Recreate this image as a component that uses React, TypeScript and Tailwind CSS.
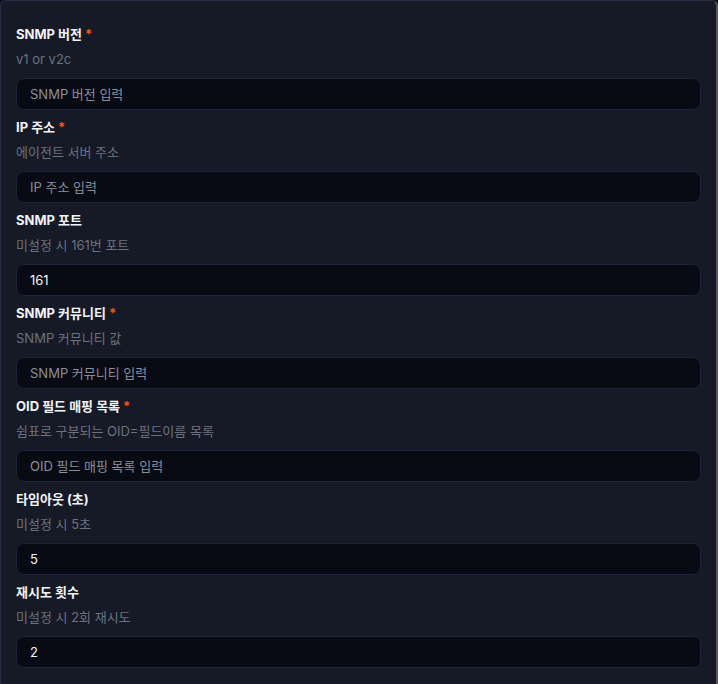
const fields = [
  { label: "SNMP 버전", required: true, hint: "v1 or v2c", placeholder: "SNMP 버전 입력", value: "" },
  { label: "IP 주소", required: true, hint: "에이전트 서버 주소", placeholder: "IP 주소 입력", value: "" },
  { label: "SNMP 포트", required: false, hint: "미설정 시 161번 포트", placeholder: "", value: "161" },
  { label: "SNMP 커뮤니티", required: true, hint: "SNMP 커뮤니티 값", placeholder: "SNMP 커뮤니티 입력", value: "" },
  { label: "OID 필드 매핑 목록", required: true, hint: "쉼표로 구분되는 OID=필드이름 목록", placeholder: "OID 필드 매핑 목록 입력", value: "" },
  { label: "타임아웃 (초)", required: false, hint: "미설정 시 5초", placeholder: "", value: "5" },
  { label: "재시도 횟수", required: false, hint: "미설정 시 2회 재시도", placeholder: "", value: "2" },
];

export default function App() {
  return (
    <div className="h-[684px] overflow-hidden bg-[#0b0f19] font-['Inter','Noto_Sans_CJK_KR',sans-serif]">
      <div className="min-h-[700px] rounded-t-md border border-r-2 border-[#262d45] border-r-[#5a5566] bg-[#151a26] px-[15px] pt-[24px]">
        {fields.map((field) => (
          <div key={field.label} className="pb-[8px]">
            <div className="flex h-[20px] items-center text-[13px] font-bold text-[#f3f4f6]">
              {field.label}
              {field.required && <span className="ml-[3px] text-[#f4511e]">*</span>}
            </div>
            <p className="mt-[4px] h-[20px] text-[13px] leading-[20px] text-[#6b7280]">{field.hint}</p>
            <input
              readOnly
              value={field.value}
              placeholder={field.placeholder}
              className="mt-[9px] h-[32px] w-full rounded-lg border border-[#1d2338] bg-[#080b13] px-[13px] text-[13px] text-[#f3f4f6] outline-none placeholder:text-[#8a8f9b]"
            />
          </div>
        ))}
      </div>
    </div>
  );
}
